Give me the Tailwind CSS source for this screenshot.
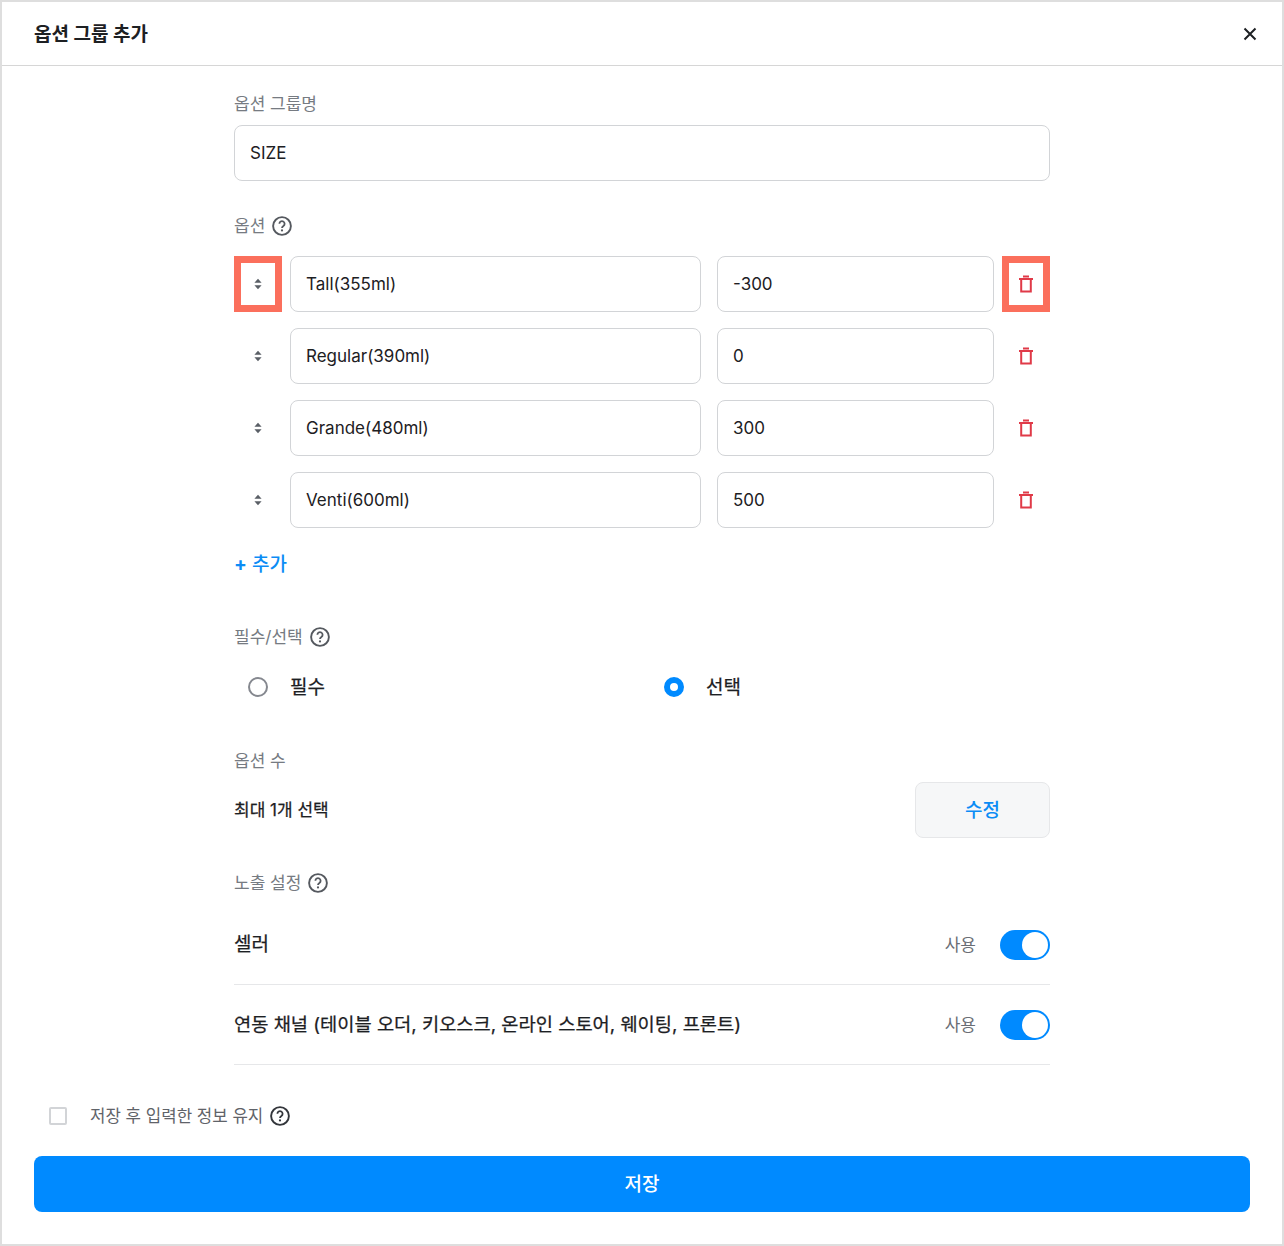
<!DOCTYPE html>
<html lang="ko">

<head>
    <meta charset="UTF-8">
    <title>옵션 그룹 추가</title>
    <script src="https://cdn.jsdelivr.net/npm/@tailwindcss/browser@4"></script>
</head>

<body class="bg-white font-['Inter','Noto_Sans_CJK_KR',sans-serif] text-[#1d2023]">
    <div class="w-[1284px] h-[1246px] border-2 border-[#dedede] flex flex-col">

        <header class="h-[64px] shrink-0 border-b border-[#d6d6d6] flex items-center justify-between pl-[32px] pr-[20px]">
            <h1 class="text-[19px] font-bold leading-6 mt-[2px]">옵션 그룹 추가</h1>
            <svg class="w-[24px] h-[24px] mt-[1px]" viewBox="0 0 24 24" fill="none" stroke="#1d2023" stroke-width="2">
                <path d="M6.5 6.5l11 11M17.5 6.5l-11 11" />
            </svg>
        </header>

        <main class="w-[816px] ml-[232px] flex flex-col">
            <p class="mt-[25px] h-6 leading-[26px] text-[17px] text-[#767b82]">옵션 그룹명</p>
            <div class="mt-[10px] h-[56px] border border-[#d2d4d7] rounded-lg flex items-center px-[15px] pt-[2px] text-[17px]">SIZE</div>

            <div class="mt-[33px] h-6 flex items-center gap-[6px] text-[17px] text-[#767b82]">
                <span class="mt-[2px]">옵션</span>
                <svg class="w-[22px] h-[22px]" viewBox="0 0 22 22" fill="none">
                    <circle cx="11" cy="11" r="8.9" stroke="#55595f" stroke-width="1.9" />
                    <path d="M8.4 8.8a2.6 2.6 0 1 1 4 2.2c-.9.6-1.4 1-1.4 2" stroke="#55595f" stroke-width="1.8" />
                    <circle cx="11" cy="15.4" r="1.1" fill="#55595f" />
                </svg>
            </div>

            <div class="mt-[18px] flex flex-col gap-4">
                <div class="flex items-center h-[56px]">
                    <div class="w-[48px] h-[56px] border-[7px] border-[#fb6f5c] flex items-center justify-center">
                        <svg class="w-[10px] h-[12px]" viewBox="0 0 10 12" fill="#5a5f66"><path d="M5 .8l3.6 4H1.4zM5 11.2l-3.6-4h7.2z" /></svg>
                    </div>
                    <div class="ml-2 w-[411px] h-[56px] border border-[#d2d4d7] rounded-lg flex items-center px-[15px] pt-[2px] text-[17px]">Tall(355ml)</div>
                    <div class="ml-4 w-[277px] h-[56px] border border-[#d2d4d7] rounded-lg flex items-center px-[15px] pt-[2px] text-[17px]">-300</div>
                    <div class="ml-2 w-[48px] h-[56px] border-[7px] border-[#fb6f5c] flex items-center justify-center">
                        <svg class="w-[16px] h-[18px]" viewBox="0 0 16 18" fill="none" stroke="#e03a48" stroke-width="2"><path d="M1 4h14M5 1.5h6M3.2 4v12.5h9.6V4" /></svg>
                    </div>
                </div>
                <div class="flex items-center h-[56px]">
                    <div class="w-[48px] flex items-center justify-center">
                        <svg class="w-[10px] h-[12px]" viewBox="0 0 10 12" fill="#5a5f66"><path d="M5 .8l3.6 4H1.4zM5 11.2l-3.6-4h7.2z" /></svg>
                    </div>
                    <div class="ml-2 w-[411px] h-[56px] border border-[#d2d4d7] rounded-lg flex items-center px-[15px] pt-[2px] text-[17px]">Regular(390ml)</div>
                    <div class="ml-4 w-[277px] h-[56px] border border-[#d2d4d7] rounded-lg flex items-center px-[15px] pt-[2px] text-[17px]">0</div>
                    <div class="ml-2 w-[48px] flex items-center justify-center">
                        <svg class="w-[16px] h-[18px]" viewBox="0 0 16 18" fill="none" stroke="#e03a48" stroke-width="2"><path d="M1 4h14M5 1.5h6M3.2 4v12.5h9.6V4" /></svg>
                    </div>
                </div>
                <div class="flex items-center h-[56px]">
                    <div class="w-[48px] flex items-center justify-center">
                        <svg class="w-[10px] h-[12px]" viewBox="0 0 10 12" fill="#5a5f66"><path d="M5 .8l3.6 4H1.4zM5 11.2l-3.6-4h7.2z" /></svg>
                    </div>
                    <div class="ml-2 w-[411px] h-[56px] border border-[#d2d4d7] rounded-lg flex items-center px-[15px] pt-[2px] text-[17px]">Grande(480ml)</div>
                    <div class="ml-4 w-[277px] h-[56px] border border-[#d2d4d7] rounded-lg flex items-center px-[15px] pt-[2px] text-[17px]">300</div>
                    <div class="ml-2 w-[48px] flex items-center justify-center">
                        <svg class="w-[16px] h-[18px]" viewBox="0 0 16 18" fill="none" stroke="#e03a48" stroke-width="2"><path d="M1 4h14M5 1.5h6M3.2 4v12.5h9.6V4" /></svg>
                    </div>
                </div>
                <div class="flex items-center h-[56px]">
                    <div class="w-[48px] flex items-center justify-center">
                        <svg class="w-[10px] h-[12px]" viewBox="0 0 10 12" fill="#5a5f66"><path d="M5 .8l3.6 4H1.4zM5 11.2l-3.6-4h7.2z" /></svg>
                    </div>
                    <div class="ml-2 w-[411px] h-[56px] border border-[#d2d4d7] rounded-lg flex items-center px-[15px] pt-[2px] text-[17px]">Venti(600ml)</div>
                    <div class="ml-4 w-[277px] h-[56px] border border-[#d2d4d7] rounded-lg flex items-center px-[15px] pt-[2px] text-[17px]">500</div>
                    <div class="ml-2 w-[48px] flex items-center justify-center">
                        <svg class="w-[16px] h-[18px]" viewBox="0 0 16 18" fill="none" stroke="#e03a48" stroke-width="2"><path d="M1 4h14M5 1.5h6M3.2 4v12.5h9.6V4" /></svg>
                    </div>
                </div>
            </div>

            <p class="mt-[24px] h-6 leading-[26px] text-[19px] font-medium text-[#0b8cf5]"><span class="font-bold">+</span> 추가</p>

            <div class="mt-[49px] h-6 flex items-center gap-[6px] text-[17px] text-[#767b82]">
                <span class="mt-[2px]">필수/선택</span>
                <svg class="w-[22px] h-[22px]" viewBox="0 0 22 22" fill="none">
                    <circle cx="11" cy="11" r="8.9" stroke="#55595f" stroke-width="1.9" />
                    <path d="M8.4 8.8a2.6 2.6 0 1 1 4 2.2c-.9.6-1.4 1-1.4 2" stroke="#55595f" stroke-width="1.8" />
                    <circle cx="11" cy="15.4" r="1.1" fill="#55595f" />
                </svg>
            </div>

            <div class="mt-[18px] grid grid-cols-2 gap-4 h-[40px]">
                <div class="flex items-center">
                    <div class="w-[48px] flex justify-center"><span class="block w-[20px] h-[20px] rounded-full border-2 border-[#85888f]"></span></div>
                    <span class="ml-2 mt-[2px] text-[19px] [-webkit-text-stroke:0.25px]">필수</span>
                </div>
                <div class="flex items-center">
                    <div class="w-[48px] flex justify-center"><span class="block w-[20px] h-[20px] rounded-full border-[6px] border-[#008aff]"></span></div>
                    <span class="ml-2 mt-[2px] text-[19px] [-webkit-text-stroke:0.25px]">선택</span>
                </div>
            </div>

            <p class="mt-[41px] h-6 leading-[26px] text-[17px] text-[#767b82]">옵션 수</p>

            <div class="mt-[10px] h-[56px] flex items-center justify-between">
                <span class="mt-[2px] text-[17px] [-webkit-text-stroke:0.25px]">최대 1개 선택</span>
                <div class="w-[135px] h-[56px] bg-[#f6f7f8] border border-[#e6e7e9] rounded-lg flex items-center justify-center pt-[2px] text-[19px] font-medium text-[#0b8cf5]">수정</div>
            </div>

            <div class="mt-[33px] h-6 flex items-center gap-[6px] text-[17px] text-[#767b82]">
                <span class="mt-[2px]">노출 설정</span>
                <svg class="w-[22px] h-[22px]" viewBox="0 0 22 22" fill="none">
                    <circle cx="11" cy="11" r="8.9" stroke="#55595f" stroke-width="1.9" />
                    <path d="M8.4 8.8a2.6 2.6 0 1 1 4 2.2c-.9.6-1.4 1-1.4 2" stroke="#55595f" stroke-width="1.8" />
                    <circle cx="11" cy="15.4" r="1.1" fill="#55595f" />
                </svg>
            </div>

            <div class="mt-[10px] h-[80px] border-b border-[#e6e7e9] flex items-center justify-between">
                <span class="mt-[2px] text-[19px] [-webkit-text-stroke:0.25px]">셀러</span>
                <div class="flex items-center gap-[24px]">
                    <span class="mt-[2px] text-[17px] text-[#6a6e75]">사용</span>
                    <div class="w-[50px] h-[30px] rounded-full bg-[#008aff] flex items-center justify-end pr-[2px]">
                        <span class="block w-[26px] h-[26px] rounded-full bg-white"></span>
                    </div>
                </div>
            </div>
            <div class="h-[80px] border-b border-[#e6e7e9] flex items-center justify-between">
                <span class="mt-[2px] text-[18.7px] [-webkit-text-stroke:0.25px]">연동 채널 (테이블 오더, 키오스크, 온라인 스토어, 웨이팅, 프론트)</span>
                <div class="flex items-center gap-[24px]">
                    <span class="mt-[2px] text-[17px] text-[#6a6e75]">사용</span>
                    <div class="w-[50px] h-[30px] rounded-full bg-[#008aff] flex items-center justify-end pr-[2px]">
                        <span class="block w-[26px] h-[26px] rounded-full bg-white"></span>
                    </div>
                </div>
            </div>
        </main>

        <div class="ml-[32px] mt-[39px] h-6 flex items-center">
            <div class="w-[48px] flex justify-center"><span class="block w-[18px] h-[18px] border-2 border-[#d2d4d7] rounded-[2px]"></span></div>
            <span class="ml-2 mt-[2px] text-[16.8px] text-[#5f6369]">저장 후 입력한 정보 유지</span>
            <svg class="ml-[6px] w-[22px] h-[22px]" viewBox="0 0 22 22" fill="none">
                <circle cx="11" cy="11" r="8.9" stroke="#33363b" stroke-width="1.9" />
                <path d="M8.4 8.8a2.6 2.6 0 1 1 4 2.2c-.9.6-1.4 1-1.4 2" stroke="#33363b" stroke-width="1.8" />
                <circle cx="11" cy="15.4" r="1.1" fill="#33363b" />
            </svg>
        </div>

        <div class="mx-[32px] mt-[28px] h-[56px] bg-[#008aff] rounded-lg flex items-center justify-center pt-[2px] text-[19px] font-medium text-white">저장</div>
    </div>
</body>

</html>
